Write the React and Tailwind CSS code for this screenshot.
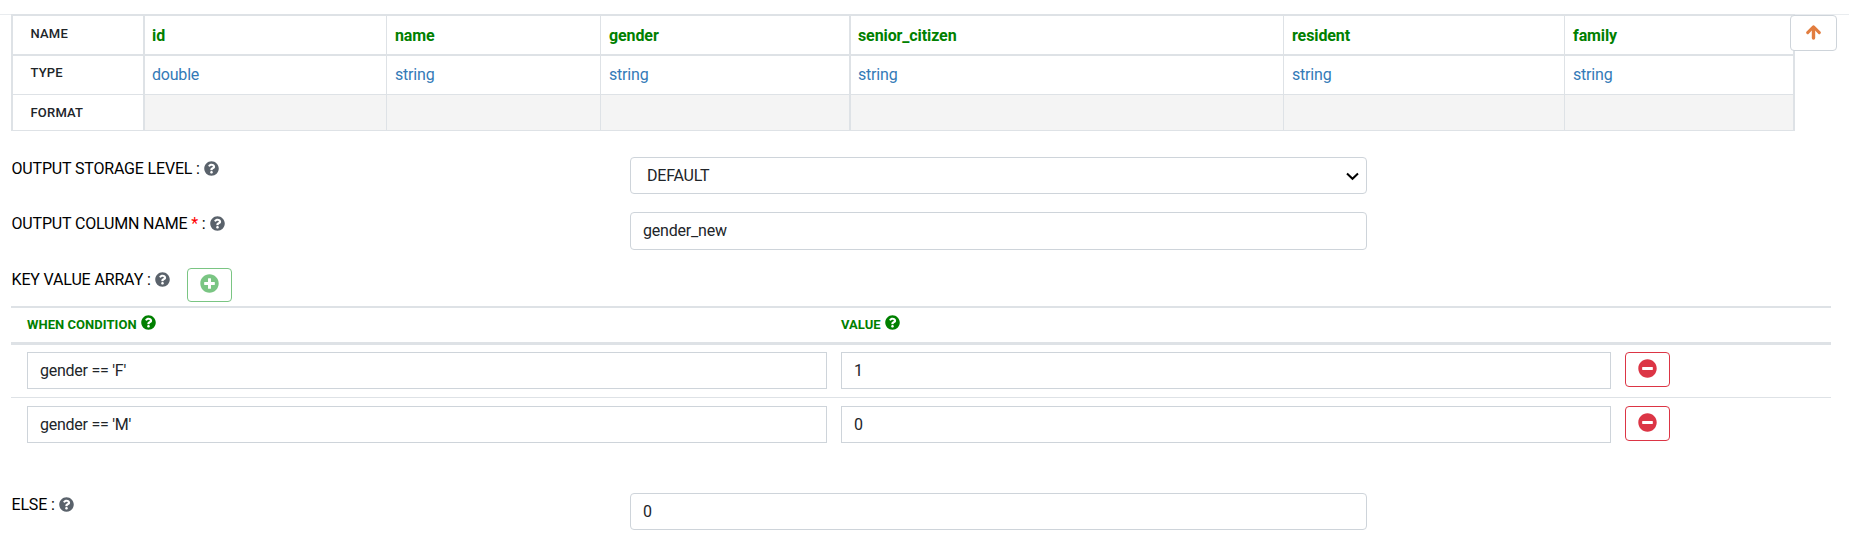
import React from 'react';
import { FaQuestionCircle, FaPlusCircle, FaMinusCircle } from 'react-icons/fa';

const columns = [
  { name: 'id', type: 'double', cls: 'w-[243px] border-l-2 pl-[7px]' },
  { name: 'name', type: 'string', cls: 'w-[214px] border-l pl-2' },
  { name: 'gender', type: 'string', cls: 'w-[249px] border-l pl-2' },
  { name: 'senior_citizen', type: 'string', cls: 'w-[434px] border-l-2 pl-[7px]' },
  { name: 'resident', type: 'string', cls: 'w-[281px] border-l pl-2' },
  { name: 'family', type: 'string', cls: 'w-[231px] border-l border-r-2 pl-2' },
];

const conditions = [
  { when: "gender == 'F'", value: '1' },
  { when: "gender == 'M'", value: '0' },
];

function RowLabel({ pad = 'pt-[9px]', children }) {
  return (
    <div className={`${pad} w-[132px] shrink-0 border-l-2 border-[#dee2e6] pl-[17.5px] text-[13px] leading-[18px] font-medium tracking-[0.2px] text-[#212529]`}>
      {children}
    </div>
  );
}

function SchemaTable() {
  return (
    <div className="relative ml-[11px] w-[1784px] border-t-2 border-[#dee2e6]">
      <div className="flex h-10 border-b-2 border-[#dee2e6]">
        <RowLabel>NAME</RowLabel>
        {columns.map((c) => (
          <div key={c.name} className={`${c.cls} border-[#dee2e6] pt-[8px] font-bold leading-6 tracking-[-0.1px] text-[#008000]`}>{c.name}</div>
        ))}
      </div>
      <div className="flex h-[39px] border-b border-[#dee2e6]">
        <RowLabel pad="pt-2">TYPE</RowLabel>
        {columns.map((c) => (
          <div key={c.name} className={`${c.cls} border-[#dee2e6] pt-[7px] leading-6 tracking-[-0.2px] text-[#337ab7]`}>{c.type}</div>
        ))}
      </div>
      <div className="flex h-9 border-b border-[#dee2e6]">
        <RowLabel>FORMAT</RowLabel>
        {columns.map((c) => (
          <div key={c.name} className={`${c.cls} border-[#dee2e6] bg-[#f4f4f4]`} />
        ))}
      </div>
      <button className="absolute -top-px left-[1779px] flex h-9 w-[47px] justify-center rounded border border-[#ced4da] bg-white pt-[8px]">
        <svg className="h-4 w-[15px] text-[#e27d3f]" viewBox="0 0 15 16" fill="none" stroke="currentColor">
          <path d="M1.7 8.6 L7.5 2.8 L13.3 8.6" strokeWidth="3" strokeLinecap="round" strokeLinejoin="round" />
          <path d="M7.5 3.5 V14" strokeWidth="3.4" strokeLinecap="round" />
        </svg>
      </button>
    </div>
  );
}

function Label({ children }) {
  return (
    <label className="flex w-[618.5px] shrink-0 items-start gap-1 leading-6 tracking-[-0.17px] text-black">
      <span>{children}</span>
      <FaQuestionCircle className="mt-[4px] size-[15px] text-[#5a626b]" />
    </label>
  );
}

export default function App() {
  return (
    <div className="h-[545px] w-[1849px] overflow-hidden bg-white pt-[14px] font-['Roboto',sans-serif] text-[16px] text-[#212529]">
      <div className="h-[117px] bg-[linear-gradient(#e9ecef,#e9ecef)] bg-[length:100%_1px] bg-no-repeat">
        <SchemaTable />
      </div>

      <div className="mt-[26px] flex h-[37px] pl-[11.5px]">
        <Label>OUTPUT STORAGE LEVEL :</Label>
        <div className="flex w-[737px] items-center justify-between rounded border border-[#ced4da] pl-4 pr-[7px] tracking-[-0.2px]">
          <span>DEFAULT</span>
          <svg className="h-3 w-[13px]" viewBox="0 0 13 12" fill="none" stroke="#000" strokeWidth="2">
            <path d="M1 3.5 L6.5 8.8 L12 3.5" />
          </svg>
        </div>
      </div>

      <div className="mt-[18px] flex h-[38px] pl-[11.5px]">
        <Label>OUTPUT COLUMN NAME <span className="text-[#ff0000]">*</span> :</Label>
        <div className="flex w-[737px] items-center rounded border border-[#ced4da] pl-3 tracking-[-0.2px]">gender_new</div>
      </div>

      <div className="mt-[18px] flex h-[38px] pl-[11.5px]">
        <div className="flex w-[175.5px] items-start gap-1 leading-6 tracking-[-0.15px] text-black">
          <span>KEY VALUE ARRAY :</span>
          <FaQuestionCircle className="mt-[4px] size-[15px] text-[#5a626b]" />
        </div>
        <button className="flex h-[34px] w-[45px] justify-center rounded border border-[#7ac583] pt-[5px]">
          <FaPlusCircle className="size-[19px] text-[#7ac583]" />
        </button>
      </div>

      <div className="ml-[11px] w-[1820px]">
        <div className="flex h-[39px] border-t-2 border-b-[3px] border-[#dee2e6] pl-4 text-[13px] font-bold leading-[18px] tracking-[0.05px] text-[#008000]">
          <div className="flex w-[814px] gap-1 pt-[7px]">
            <span className="pt-px">WHEN CONDITION</span>
            <FaQuestionCircle className="size-[15px]" />
          </div>
          <div className="flex gap-1 pt-[7px]">
            <span className="pt-px">VALUE</span>
            <FaQuestionCircle className="size-[15px]" />
          </div>
        </div>
        {conditions.map((c, i) => (
          <div key={c.when} className={i === 0 ? 'flex h-[53px] border-b border-[#dee2e6] pl-4 pt-[7px]' : 'flex h-[53px] pl-4 pt-2'}>
            <div className="flex h-[37px] w-[800px] items-center border border-[#ced4da] pl-3 tracking-[-0.25px]">{c.when}</div>
            <div className="ml-[14px] flex h-[37px] w-[770px] items-center border border-[#ced4da] pl-3">{c.value}</div>
            <button className="ml-[14px] flex h-[35px] w-[45px] justify-center rounded border border-[#dc3545] pt-[6px]">
              <FaMinusCircle className="size-[19px] text-[#dc3545]" />
            </button>
          </div>
        ))}
      </div>

      <div className="mt-[42px] flex h-[37px] pl-[11.5px]">
        <Label>ELSE :</Label>
        <div className="flex w-[737px] items-center rounded border border-[#ced4da] pl-3">0</div>
      </div>
    </div>
  );
}
